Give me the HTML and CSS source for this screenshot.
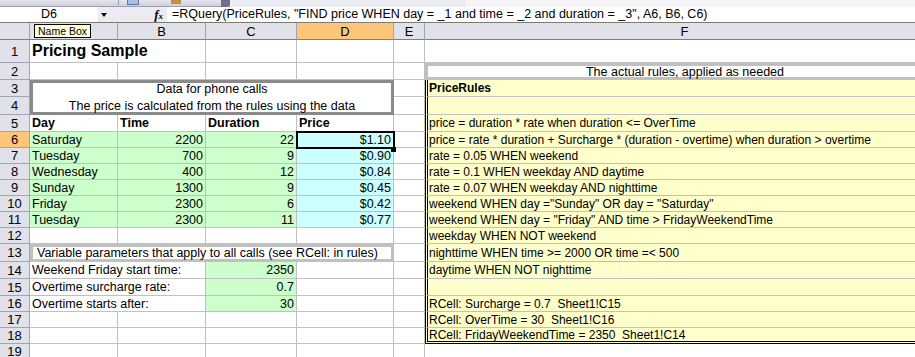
FILE: index.html
```html
<!DOCTYPE html>
<html lang="en">
<head>
    <meta charset="UTF-8" />
    <title>Pricing Sample</title>
    <link rel="stylesheet" href="styles.css">
</head>
<body>
    <div class="topbar">
        <div class="tools">
            <span class="sep"></span>
            <span class="ico ico1"></span>
            <span class="ico ico2"></span>
            <span class="grip"></span>
        </div>
        <div class="band"></div>
    </div>

    <div class="fbar">
        <div class="namebox">D6</div>
        <div class="nb-drop"></div>
        <div class="fx"><i>f</i><small>x</small></div>
        <div class="formula">=RQuery(PriceRules, "FIND price WHEN day = _1 and time = _2 and duration = _3", A6, B6, C6)</div>
    </div>

    <div class="sheet">
        <!-- column headers (A is under the tooltip) -->
        <div class="h col"></div>
        <div class="h col"></div>
        <div class="h col">B</div>
        <div class="h col">C</div>
        <div class="h col on">D</div>
        <div class="h col">E</div>
        <div class="h col">F</div>

        <div class="h">1</div>
        <div class="title">Pricing Sample</div>
        <div></div><div></div><div></div><div></div>

        <div class="h">2</div>
        <div></div><div></div><div></div><div></div><div></div>
        <div class="rules-head">The actual rules, applied as needed</div>

        <div class="h">3</div>
        <div class="intro top">Data for phone calls</div>
        <div></div>
        <div class="rule b">PriceRules</div>

        <div class="h">4</div>
        <div class="intro bottom">The price is calculated from the rules using the data</div>
        <div></div>
        <div class="rule"></div>

        <div class="h">5</div>
        <div class="b">Day</div>
        <div class="b">Time</div>
        <div class="b">Duration</div>
        <div class="b">Price</div>
        <div></div>
        <div class="rule">price = duration * rate when duration &lt;= OverTime</div>

        <!-- call data -->
        <div class="h on">6</div>
        <div class="grn">Saturday</div>
        <div class="grn num">2200</div>
        <div class="grn num">22</div>
        <div class="cyn num cur">$1.10</div>
        <div></div>
        <div class="rule">price = rate * duration + Surcharge * (duration - overtime) when duration &gt; overtime</div>

        <div class="h">7</div>
        <div class="grn">Tuesday</div>
        <div class="grn num">700</div>
        <div class="grn num">9</div>
        <div class="cyn num">$0.90</div>
        <div></div>
        <div class="rule">rate = 0.05 WHEN weekend</div>

        <div class="h">8</div>
        <div class="grn">Wednesday</div>
        <div class="grn num">400</div>
        <div class="grn num">12</div>
        <div class="cyn num">$0.84</div>
        <div></div>
        <div class="rule">rate = 0.1 WHEN weekday AND daytime</div>

        <div class="h">9</div>
        <div class="grn">Sunday</div>
        <div class="grn num">1300</div>
        <div class="grn num">9</div>
        <div class="cyn num">$0.45</div>
        <div></div>
        <div class="rule">rate = 0.07 WHEN weekday AND nighttime</div>

        <div class="h">10</div>
        <div class="grn">Friday</div>
        <div class="grn num">2300</div>
        <div class="grn num">6</div>
        <div class="cyn num">$0.42</div>
        <div></div>
        <div class="rule">weekend WHEN day ="Sunday" OR day = "Saturday"</div>

        <div class="h">11</div>
        <div class="grn">Tuesday</div>
        <div class="grn num">2300</div>
        <div class="grn num">11</div>
        <div class="cyn num">$0.77</div>
        <div></div>
        <div class="rule">weekend WHEN day = "Friday" AND time &gt; FridayWeekendTime</div>

        <div class="h">12</div>
        <div></div><div></div><div></div><div></div><div></div>
        <div class="rule">weekday WHEN NOT weekend</div>

        <!-- parameters -->
        <div class="h">13</div>
        <div class="note">Variable parameters that apply to all calls (see RCell: in rules)</div>
        <div></div>
        <div class="rule">nighttime WHEN time &gt;= 2000 OR time =&lt; 500</div>

        <div class="h">14</div>
        <div class="param">Weekend Friday start time:</div>
        <div class="grn num">2350</div>
        <div></div><div></div>
        <div class="rule">daytime WHEN NOT nighttime</div>

        <div class="h">15</div>
        <div class="param">Overtime surcharge rate:</div>
        <div class="grn num">0.7</div>
        <div></div><div></div>
        <div class="rule"></div>

        <div class="h">16</div>
        <div class="param">Overtime starts after:</div>
        <div class="grn num">30</div>
        <div></div><div></div>
        <div class="rule">RCell: Surcharge = 0.7  Sheet1!C15</div>

        <div class="h">17</div>
        <div></div><div></div><div></div><div></div><div></div>
        <div class="rule">RCell: OverTime = 30  Sheet1!C16</div>

        <div class="h">18</div>
        <div></div><div></div><div></div><div></div><div></div>
        <div class="rule last">RCell: FridayWeekendTime = 2350  Sheet1!C14</div>

        <div class="h">19</div>
        <div></div><div></div><div></div><div></div><div></div><div></div>
    </div>

    <div class="tip">Name Box</div>
</body>
</html>
```

FILE: styles.css
```css
body {
    margin: 0;
    width: 915px;
    height: 357px;
    overflow: hidden;
    position: relative;
    background: #fff;
    color: #000;
    font-family: "Liberation Sans", Arial, sans-serif;
    font-size: 12.5px;
}

/* toolbar remains at the top */
.topbar {
    height: 7px;
    display: flex;
    background: #f6f6f9;
}
.tools {
    width: 230px;
    position: relative;
    box-sizing: border-box;
    background: linear-gradient(#e6e6ef, #cfcfdd);
    border-bottom: 1px solid #9d9db5;
}
.tools .sep {
    position: absolute;
    left: 118px; top: 0;
    width: 1px; height: 5px;
    background: #9d9db5;
}
.ico {
    position: absolute;
    top: 0;
    height: 4px;
}
.ico1 {
    left: 127px;
    width: 10px;
    background: #a9c0e2;
    border: 1px solid #5a77a6;
    border-top: 0;
}
.ico2 {
    left: 171px;
    width: 10px;
    background: #c98c3e;
}
.tools .grip {
    position: absolute;
    right: 0; top: 0;
    width: 9px; height: 7px;
    background: #6f6f8c;
    border-radius: 0 0 3px 0;
}
.band {
    width: 236px;
    background: #ececf3;
}

/* formula bar */
.fbar {
    display: flex;
    height: 16px;
    box-sizing: border-box;
    background: #ebebf1;
    border-bottom: 1px solid #7b7b70;
    line-height: 15px;
}
.namebox {
    width: 98px;
    background: #fff;
    text-align: center;
}
.nb-drop {
    width: 12px;
    position: relative;
}
.nb-drop::after {
    content: "";
    position: absolute;
    left: 3px; top: 6px;
    border-left: 3.5px solid transparent;
    border-right: 3.5px solid transparent;
    border-top: 4px solid #000;
}
.fx {
    width: 57px;
    box-sizing: border-box;
    padding-right: 4px;
    text-align: right;
    font-family: "Liberation Serif", serif;
    font-weight: bold;
    font-size: 13px;
}
.fx small {
    font-size: 9px;
    font-style: italic;
}
.formula {
    flex: 1;
    background: #fff;
    padding-left: 5px;
    white-space: pre;
}

/* the grid */
.sheet {
    display: grid;
    grid-template-columns: 30px 88px 88px 91px 97px 31px 520px;
    grid-template-rows: 17px 23px 17px 17px 18px 17px repeat(7, 16px) 18px 17px 17px repeat(4, 16px);
}
.sheet > div {
    box-sizing: border-box;
    border-right: 1px solid #c0c0c0;
    border-bottom: 1px solid #c0c0c0;
    padding: 0 2px;
    display: flex;
    align-items: center;
    white-space: pre;
    overflow: hidden;
}
.sheet > .h {
    background: #e1e1ea;
    border-right-color: #a3a3b5;
    border-bottom-color: #a3a3b5;
    justify-content: center;
    padding: 0;
    font-size: 13px;
}
.sheet > .col {
    border-bottom-color: #7f7f75;
}
.sheet > .on {
    background: #ffc67b;
}

.sheet > .title {
    grid-column: span 2;
    font-weight: bold;
    font-size: 16px;
}
.b { font-weight: bold; }
.sheet > .num { justify-content: flex-end; }
.grn { background: #ccffcc; }
.cyn { background: #ccffff; }

.sheet > .intro {
    grid-column: span 4;
    justify-content: center;
    border: 0;
}
.intro.top {
    box-shadow: inset 3px 3px 0 #8a8a8a, inset -3px 0 0 #8a8a8a;
}
.intro.bottom {
    box-shadow: inset 3px -3px 0 #8a8a8a, inset -3px 0 0 #8a8a8a;
}
.sheet > .note {
    grid-column: span 4;
    border: 0;
    padding-left: 7px;
    box-shadow: inset 0 0 0 3px #c0c0c0;
}
.sheet > .param {
    grid-column: span 2;
}

/* rules column */
.sheet > .rules-head {
    justify-content: center;
    border: 0;
    box-shadow: inset 3px 3px 0 #c0c0c0, inset 0 -3px 0 #c0c0c0;
}
.sheet > .rule {
    background: #ffffcc;
    border-left: 3px double #000;
    padding-left: 1px;
    font-size: 12px;
}
.sheet > .rule.last {
    border-bottom: 3px double #000;
}

/* active cell D6 */
.sheet > .cur {
    position: relative;
    overflow: visible;
}
.cur::before {
    content: "";
    position: absolute;
    left: -1px; top: -1px; right: -2px; bottom: -2px;
    border: 2px solid #000;
}
.cur::after {
    content: "";
    position: absolute;
    right: -3px; bottom: -5px;
    width: 5px; height: 5px;
    background: #000;
    z-index: 1;
}

.tip {
    position: absolute;
    left: 34px; top: 24px;
    height: 14px;
    box-sizing: border-box;
    padding: 0 3px;
    background: #ffffe1;
    border: 1px solid #000;
    font-size: 10.5px;
    line-height: 12px;
}
```
